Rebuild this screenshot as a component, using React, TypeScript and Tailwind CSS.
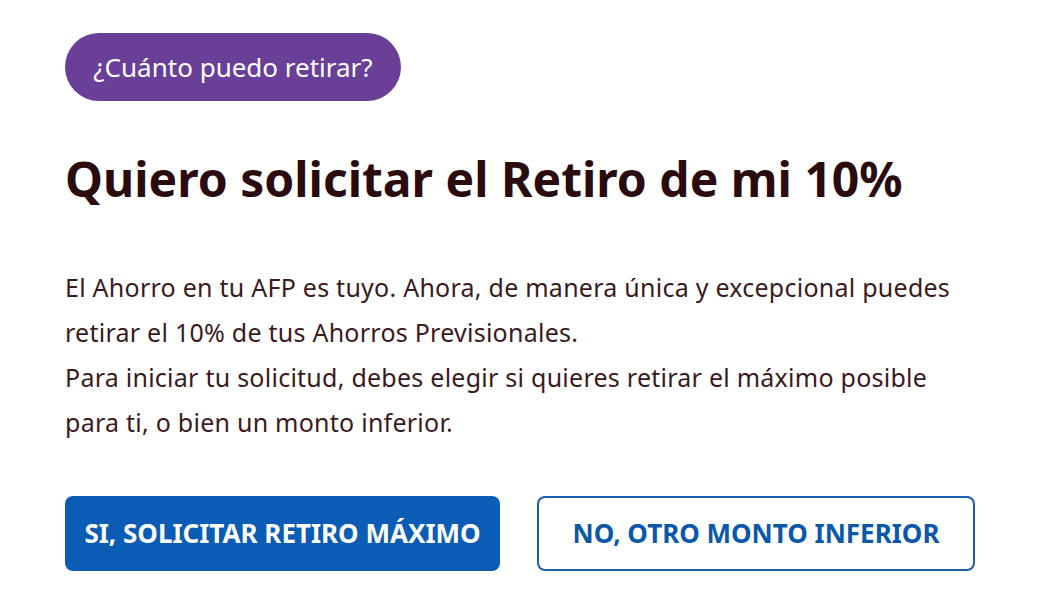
import React from "react";

export default function App() {
  return (
    <div className="w-[1040px] h-[600px] bg-white" style={{ fontFamily: '"Noto Sans", "Open Sans", sans-serif' }}>
      <div className="pl-[65px] pt-[33px] flex flex-col items-start">
        <div className="h-[68px] w-[336px] rounded-full bg-[#6a3f97] text-white text-[26px] flex items-center justify-center">
          ¿Cuánto puedo retirar?
        </div>
        <h1 className="mt-[48px] text-[48px] leading-[60px] font-bold text-[#2a0b0e]">
          Quiero solicitar el Retiro de mi 10%
        </h1>
        <p className="mt-[56px] w-[940px] text-[25px] tracking-[0.25px] leading-[45px] text-[#3b1a1d]">
          El Ahorro en tu AFP es tuyo. Ahora, de manera única y excepcional puedes
          <br />
          retirar el 10% de tus Ahorros Previsionales.
          <br />
          Para iniciar tu solicitud, debes elegir si quieres retirar el máximo posible
          <br />
          para ti, o bien un monto inferior.
        </p>
        <div className="mt-[51px] flex gap-[37px]">
          <button className="h-[75px] w-[435px] rounded-[8px] bg-[#0a5cb4] text-white text-[26px] font-bold">
            SI, SOLICITAR RETIRO MÁXIMO
          </button>
          <button className="h-[75px] w-[438px] rounded-[8px] border-2 border-[#1a5fae] bg-white text-[#0b57a8] text-[26px] font-bold">
            NO, OTRO MONTO INFERIOR
          </button>
        </div>
      </div>
    </div>
  );
}
